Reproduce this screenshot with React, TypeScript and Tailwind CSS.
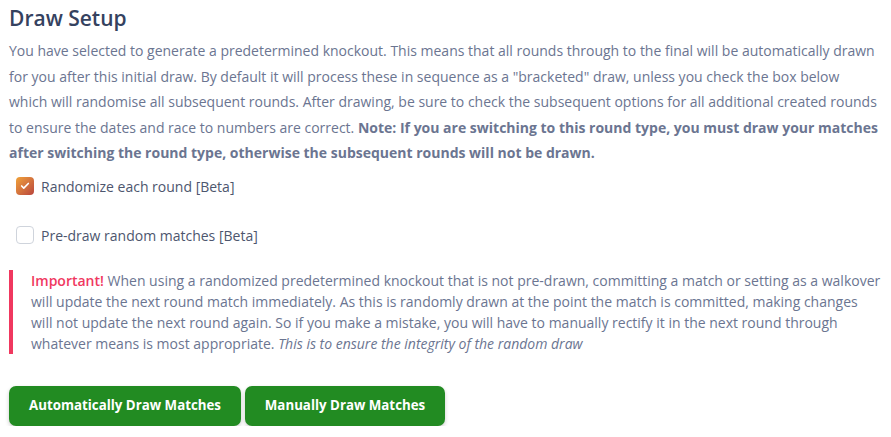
import { Check } from 'lucide-react'

export default function App() {
  return (
    <div className="pl-[9px] pr-[10px] pt-[2px] font-['Open_Sans',sans-serif] text-[#6b7591]">
      <h2 className="text-[21px] font-semibold text-[#35425f] leading-[32px]">Draw Setup</h2>
      <p className="mr-[2px] mt-[4px] text-[14px] leading-[25.5px]">
        You have selected to generate a predetermined knockout. This means that all rounds through to the final will be
        automatically drawn for you after this initial draw. By default it will process these in sequence as a
        "bracketed" draw, unless you check the box below which will randomise all subsequent rounds. After drawing, be
        sure to check the subsequent options for all additional created rounds to ensure the dates and race to numbers
        are correct.{' '}
        <strong className="font-bold">
          Note: If you are switching to this round type, you must draw your matches after switching the round type,
          otherwise the subsequent rounds will not be drawn.
        </strong>
      </p>

      <div className="mt-[10px] flex flex-col gap-[28px] pl-[7px]">
        <label className="flex items-center gap-[7px] text-[14px] text-[#4d566e]">
          <span className="flex h-[18px] w-[18px] items-center justify-center rounded-[4px] bg-gradient-to-br from-[#f0a238] to-[#b8443c]">
            <Check className="h-[10px] w-[10px] text-white" strokeWidth={4} />
          </span>
          Randomize each round [Beta]
        </label>
        <label className="flex items-center gap-[7px] text-[14px] text-[#4d566e]">
          <span className="h-[18px] w-[18px] rounded-[4px] border border-[#cfd4dc] bg-white" />
          Pre-draw random matches [Beta]
        </label>
      </div>

      <div className="mt-[24px] border-l-4 border-[#f0385f] pl-[18px] text-[14px] leading-[21px]">
        <span className="font-semibold text-[#f0385f]">Important!</span> When using a randomized predetermined knockout
        that is not pre-drawn, committing a match or setting as a walkover will update the next round match immediately.
        As this is randomly drawn at the point the match is committed, making changes will not update the next round
        again. So if you make a mistake, you will have to manually rectify it in the next round through whatever means is
        most appropriate. <em>This is to ensure the integrity of the random draw</em>
      </div>

      <div className="mt-[32px] flex gap-[4px]">
        <button className="h-[40px] w-[232px] rounded-[7px] bg-[#228b22] text-[13.3px] font-bold text-white shadow-[0_2px_4px_rgba(0,0,0,0.2)]">
          Automatically Draw Matches
        </button>
        <button className="h-[40px] w-[200px] rounded-[7px] bg-[#228b22] text-[13.3px] font-bold text-white shadow-[0_2px_4px_rgba(0,0,0,0.2)]">
          Manually Draw Matches
        </button>
      </div>
    </div>
  )
}
